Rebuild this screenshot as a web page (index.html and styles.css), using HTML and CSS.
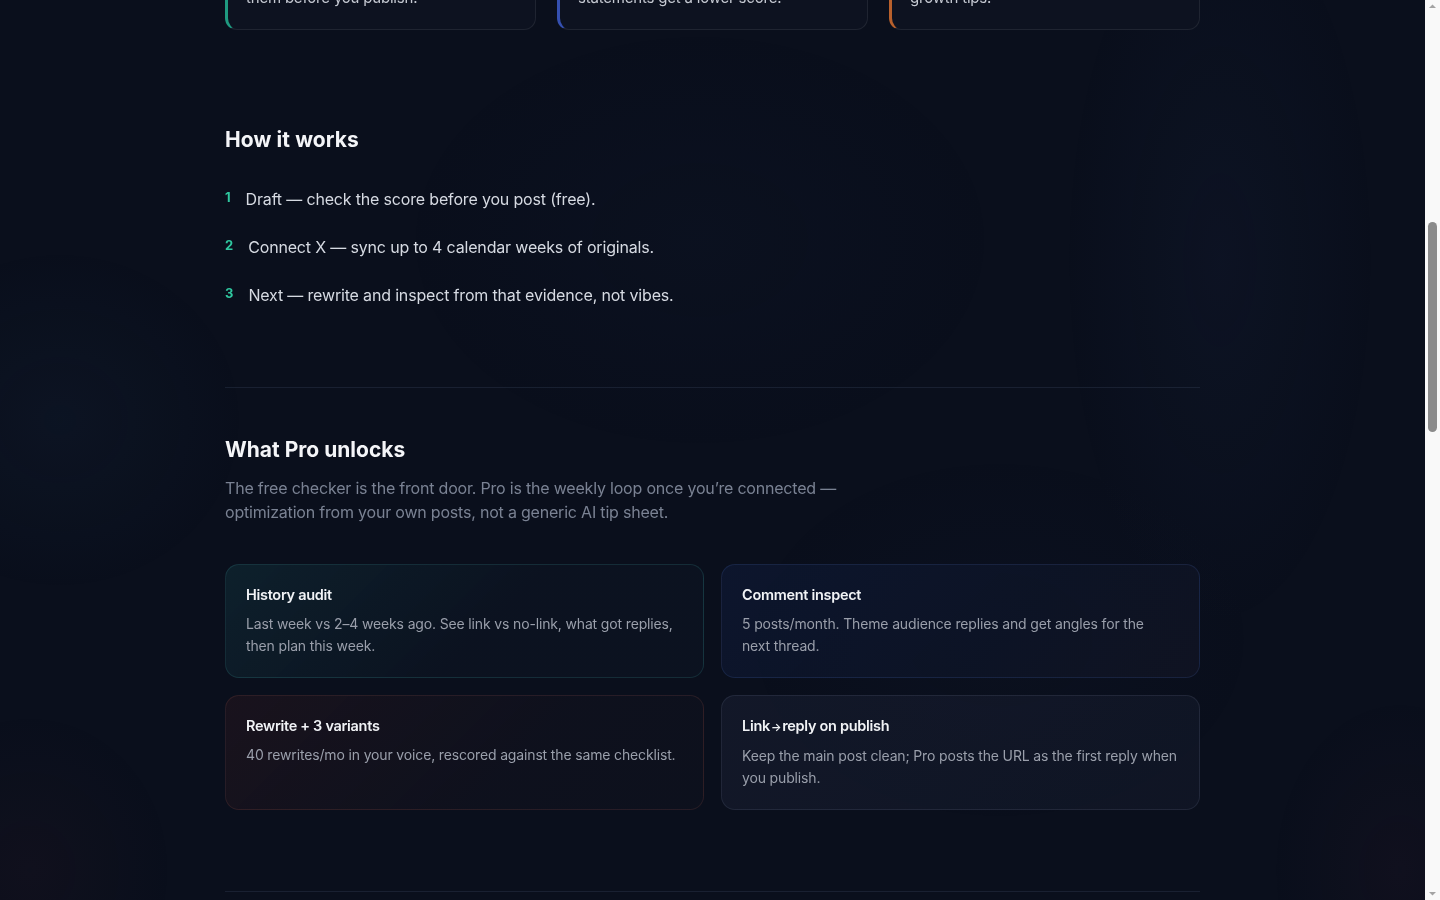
FILE: index.html
```html
<!DOCTYPE html>
<html lang="en">
<head>
<meta charset="utf-8">
<title>How it works</title>
<link rel="stylesheet" href="styles.css">
</head>
<body>
<div class="glow" aria-hidden="true"></div>
<main class="page">
  <div class="lead-space"></div>

  <section class="signals">
    <div class="signal signal-green"><p>them before you publish.</p></div>
    <div class="signal signal-blue"><p>statements get a lower score.</p></div>
    <div class="signal signal-orange"><p>growth tips.</p></div>
  </section>

  <section class="how">
    <h2 class="how-title">How it works</h2>
    <ol class="steps">
      <li class="step"><span class="step-num">1</span><span class="step-text">Draft — check the score before you post (free).</span></li>
      <li class="step"><span class="step-num">2</span><span class="step-text">Connect X — sync up to 4 calendar weeks of originals.</span></li>
      <li class="step"><span class="step-num">3</span><span class="step-text">Next — rewrite and inspect from that evidence, not vibes.</span></li>
    </ol>
  </section>

  <hr class="rule">

  <section class="pro">
    <h2 class="pro-title">What Pro unlocks</h2>
    <p class="lede">The free checker is the front door. Pro is the weekly loop once you’re connected — optimization from your own posts, not a generic AI tip sheet.</p>
    <div class="features">
      <article class="feature feature-teal">
        <h3>History audit</h3>
        <p>Last week vs 2–4 weeks ago. See link vs no-link, what got replies, then plan this week.</p>
      </article>
      <article class="feature feature-blue">
        <h3>Comment inspect</h3>
        <p>5 posts/month. Theme audience replies and get angles for the<br>next thread.</p>
      </article>
      <article class="feature feature-red">
        <h3>Rewrite + 3 variants</h3>
        <p>40 rewrites/mo in your voice, rescored against the same checklist.</p>
      </article>
      <article class="feature feature-slate">
        <h3>Link<span class="arrow">→</span>reply on publish</h3>
        <p>Keep the main post clean; Pro posts the URL as the first reply when you publish.</p>
      </article>
    </div>
  </section>

  <hr class="rule">

  <div class="tail-space"></div>
</main>

<div class="scrollbar" aria-hidden="true">
  <svg class="sb-arrow" width="15" height="15" viewBox="0 0 15 15"><path d="M4 8 L7.5 4.5 L11 8 Z" fill="#a3a3a3"/></svg>
  <div class="sb-track"><div class="sb-thumb"></div></div>
  <svg class="sb-arrow" width="15" height="15" viewBox="0 0 15 15"><path d="M4 7 L7.5 10.5 L11 7 Z" fill="#a3a3a3"/></svg>
</div>

<script src="script.js"></script>
</body>
</html>
```

FILE: styles.css
```css
html, body {
  margin: 0;
  padding: 0;
}

body {
  background: #0a0f1c;
  color: #d3d7df;
  font-family: "Inter", "Noto Sans", sans-serif;
  -webkit-font-smoothing: antialiased;
  padding-right: 15px;
}

/* classic scrollbar drawn over the right edge */
.scrollbar {
  position: fixed;
  top: 0;
  right: 0;
  width: 15px;
  height: 100vh;
  background: #f9f9f9;
  display: flex;
  flex-direction: column;
  z-index: 5;
}

.sb-arrow {
  display: block;
  flex: none;
}

.sb-track {
  flex: 1;
  padding: 0 3px;
}

.sb-thumb {
  margin-top: 207px;
  height: 210px;
  background: #8b8b8b;
  border-radius: 5px;
}

.glow {
  position: fixed;
  inset: 0;
  pointer-events: none;
  z-index: 0;
  background:
    radial-gradient(ellipse 220px 520px at 1220px 260px, rgba(40, 60, 110, 0.09), transparent 70%),
    radial-gradient(ellipse 260px 240px at 60px 420px, rgba(30, 60, 90, 0.11), transparent 70%),
    radial-gradient(ellipse 420px 300px at 700px 240px, rgba(30, 45, 90, 0.06), transparent 70%),
    radial-gradient(ellipse 200px 220px at 30px 870px, rgba(70, 30, 40, 0.10), transparent 70%),
    radial-gradient(ellipse 180px 240px at 1400px 870px, rgba(70, 30, 50, 0.10), transparent 70%),
    radial-gradient(ellipse 360px 260px at 1000px 640px, rgba(30, 40, 80, 0.06), transparent 70%);
}

.page {
  position: relative;
  z-index: 1;
  max-width: 975px;
  margin: 0 auto;
}

.lead-space {
  height: 780px;
}

/* top signal cards */
.signals {
  display: grid;
  grid-template-columns: repeat(3, 1fr);
  gap: 21px;
}

.signal {
  background: #0d1220;
  border: 1px solid rgba(255, 255, 255, 0.08);
  border-left: 3px solid;
  border-radius: 12px;
  padding: 96px 20px 20px 18px;
}

.signal p {
  margin: 0;
  font-size: 15px;
  line-height: 22px;
  color: #c6cad3;
  letter-spacing: -0.2px;
}

.signal-green { border-left-color: #1f9a80; }
.signal-blue { border-left-color: #3550b0; }
.signal-orange { border-left-color: #b8602c; }

/* how it works */
.how {
  padding: 96px 0 79px;
}

.how-title,
.pro-title {
  margin: 0;
  color: #f4f5f8;
  font-weight: 700;
}

.how-title {
  font-size: 21px;
  line-height: 27px;
  letter-spacing: 0.1px;
}

.steps {
  list-style: none;
  margin: 33px 0 0;
  padding: 0;
  display: flex;
  flex-direction: column;
  gap: 22px;
}

.step {
  display: flex;
  align-items: flex-start;
  gap: 15px;
}

.step-num {
  padding-top: 2px;
  font-size: 13px;
  line-height: 19px;
  font-weight: 700;
  color: #2fc79f;
}

.step-text {
  font-size: 16px;
  line-height: 26px;
  color: #d6dae2;
  letter-spacing: -0.17px;
}

.rule {
  margin: 0;
  border: 0;
  height: 1px;
  background: rgba(120, 140, 180, 0.14);
}

/* pro section */
.pro {
  padding: 49px 0 81px;
}

.pro-title {
  font-size: 21px;
  line-height: 26px;
  letter-spacing: 0;
}

.lede {
  margin: 13px 0 0;
  max-width: 640px;
  font-size: 16px;
  line-height: 24px;
  color: #7a8293;
  letter-spacing: -0.2px;
}

.features {
  margin-top: 40px;
  display: grid;
  grid-template-columns: 1fr 1fr;
  gap: 17px;
}

.feature {
  border: 1px solid rgba(255, 255, 255, 0.08);
  border-radius: 14px;
  padding: 19px 20px 20px;
  min-height: 72px;
}

.feature h3 {
  margin: 0;
  font-size: 14.5px;
  line-height: 22px;
  font-weight: 600;
  color: #f1f3f6;
  letter-spacing: -0.3px;
}

.feature p {
  margin: 7px 0 0;
  font-size: 14px;
  line-height: 22px;
  color: #9a9fab;
  letter-spacing: -0.15px;
}

.arrow {
  font-size: 11px;
  margin: 0 1px;
}

.feature-teal {
  background: linear-gradient(135deg, rgba(18, 50, 60, 0.5), rgba(12, 20, 34, 0.7) 55%, rgba(12, 20, 34, 0.7));
  border-color: rgba(60, 150, 150, 0.2);
}

.feature-blue {
  background: linear-gradient(135deg, rgba(16, 28, 60, 0.55), rgba(14, 22, 42, 0.6) 60%, rgba(20, 22, 38, 0.6));
  border-color: rgba(80, 110, 190, 0.18);
}

.feature-red {
  background: linear-gradient(135deg, rgba(38, 22, 30, 0.55), rgba(16, 18, 30, 0.7) 60%, rgba(14, 18, 30, 0.7));
  border-color: rgba(160, 90, 80, 0.18);
}

.feature-slate {
  background: linear-gradient(135deg, rgba(22, 28, 46, 0.7), rgba(18, 24, 40, 0.7));
  border-color: rgba(140, 150, 180, 0.14);
}

.tail-space {
  height: 1950px;
}
```

FILE: script.js
```js
(function () {
  function place() {
    var cards = document.querySelector('.signals');
    if (!cards) return;
    var r = cards.getBoundingClientRect();
    window.scrollTo(0, r.bottom + window.scrollY - 30);
  }
  place();
  window.addEventListener('load', place);
})();
```
